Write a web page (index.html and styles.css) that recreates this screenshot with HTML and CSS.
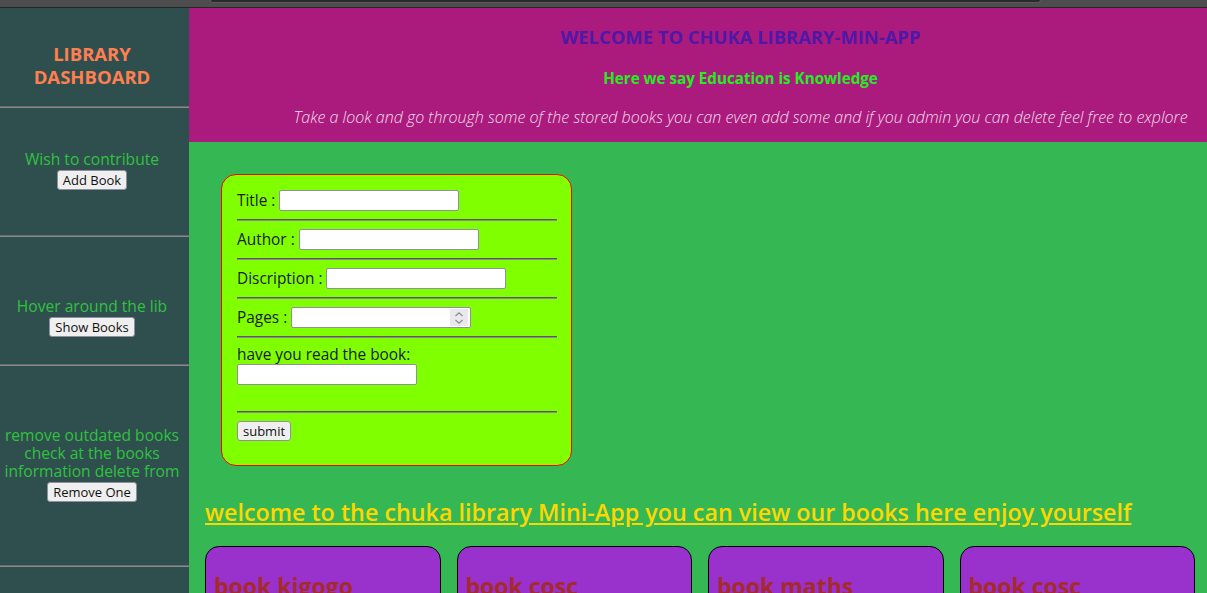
FILE: index.html
```html
<!DOCTYPE html>
<html lang="en">
<head>
<meta charset="utf-8">
<title>Chuka Library</title>
<link rel="stylesheet" href="styles.css">
</head>
<body>
<div class="chrome"><div class="urlbar"></div></div>
<div class="app">
  <aside class="sidebar">
    <div class="brand">LIBRARY<br>DASHBOARD</div>
    <hr class="side-rule">
    <div class="side-sec sec-add">
      <p>Wish to contribute</p>
      <button type="button">Add Book</button>
    </div>
    <hr class="side-rule">
    <div class="side-sec sec-show">
      <p>Hover around the lib</p>
      <button type="button">Show Books</button>
    </div>
    <hr class="side-rule">
    <div class="side-sec sec-remove">
      <p>remove outdated books check at the books information delete from</p>
      <button type="button">Remove One</button>
    </div>
    <hr class="side-rule">
  </aside>
  <main class="main">
    <header class="hero">
      <h1>WELCOME TO CHUKA LIBRARY-MIN-APP</h1>
      <h3>Here we say Education is Knowledge</h3>
      <p>Take a look and go through some of the stored books you can even add some and if you admin you can delete feel free to explore</p>
    </header>
    <section class="content">
      <form class="book-form">
        <div class="row"><label>Title :</label><input type="text" class="field"></div>
        <hr class="form-rule">
        <div class="row"><label>Author :</label><input type="text" class="field"></div>
        <hr class="form-rule">
        <div class="row"><label>Discription :</label><input type="text" class="field"></div>
        <hr class="form-rule">
        <div class="row"><label>Pages :</label>
          <div class="num">
            <input type="text" inputmode="numeric" class="num-input">
            <span class="spin">
              <svg width="10" height="14" viewBox="0 0 10 14"><path d="M1.5 5 L5 1.8 L8.5 5 M1.5 9 L5 12.2 L8.5 9" fill="none" stroke="#8a8a92" stroke-width="1.2"/></svg>
            </span>
          </div>
        </div>
        <hr class="form-rule">
        <div class="read">
          <label>have you read the book:</label>
          <input type="text" class="field">
          <div class="blank"></div>
        </div>
        <hr class="form-rule">
        <button type="button" class="submit">submit</button>
      </form>
      <h2 class="welcome"><a href="#">welcome to the chuka library Mini-App you can view our books here enjoy yourself</a></h2>
      <div class="cards">
        <div class="card"><h2>book kigogo</h2></div>
        <div class="card"><h2>book cosc</h2></div>
        <div class="card"><h2>book maths</h2></div>
        <div class="card"><h2>book cosc</h2></div>
      </div>
    </section>
  </main>
</div>
</body>
</html>
```
FILE: styles.css
```css
* { box-sizing: border-box; }
html, body { margin: 0; padding: 0; }
body {
  font-family: "Open Sans", Lato, sans-serif;
  font-size: 16px;
  background: #35b853;
  height: 593px;
  overflow: hidden;
  display: flex;
  flex-direction: column;
}
.chrome {
  flex: 0 0 8px;
  background: #4d4d4d;
  border-bottom: 1px solid #262626;
}
.urlbar {
  margin-left: 210px;
  width: 831px;
  height: 3px;
  background: #2a2a2a;
  border: 1px solid #5a5a5a;
  border-top: none;
  border-radius: 0 0 4px 4px;
}
.app {
  flex: 1;
  display: flex;
  min-height: 0;
}
.sidebar {
  width: 189px;
  flex: 0 0 189px;
  background: #2f4f4f;
  color: #2fc23e;
  text-align: center;
}
.brand {
  height: 98px;
  padding: 34px 5px 0 0;
  color: #ff7f50;
  font-weight: 700;
  font-size: 18.5px;
  line-height: 23px;
}
.side-rule {
  margin: 0;
  height: 2px;
  border: none;
  border-top: 1px solid #6a6a6a;
  border-bottom: 1px solid #8a8a8a;
}
.side-sec { padding-right: 5px; }
.side-sec p { margin: 0; line-height: 18px; font-size: 15.6px; }
.side-sec button,
.submit {
  font-family: "Open Sans", Lato, sans-serif;
  font-size: 13px;
  line-height: 16px;
  height: 20px;
  padding: 0 5px;
  color: #111;
  background: #efefef;
  border: 1px solid #8f8f9d;
  border-radius: 3px;
}
.sec-add { height: 127px; padding-top: 42px; }
.sec-show { height: 127px; padding-top: 60px; }
.sec-remove { height: 199px; padding-top: 60px; }

.main {
  flex: 1;
  display: flex;
  flex-direction: column;
  min-width: 0;
}
.hero {
  flex: 0 0 134px;
  background: #ab1b7e;
  padding: 18px 10px 0 95px;
  text-align: center;
}
.hero h1 {
  margin: 0;
  font-size: 18.4px;
  line-height: 22px;
  color: #4e18a8;
  font-weight: 700;
}
.hero h3 {
  margin: 20px 0 0;
  font-size: 15.2px;
  line-height: 20px;
  color: #22ee22;
  font-weight: 700;
}
.hero p {
  margin: 19px 0 0;
  font-size: 16px;
  line-height: 20px;
  font-style: italic;
  font-weight: 300;
  color: #f3dcea;
  white-space: nowrap;
}
.content {
  padding: 16px 12px 0 16px;
}
.book-form {
  margin: 16px 0 0 16px;
  width: 351px;
  background: #7fff00;
  border: 1px solid #ff0000;
  border-radius: 15px;
  padding: 15px 14px 24px 15px;
  color: #1a1a1a;
  font-size: 15.4px;
}
.row {
  display: flex;
  align-items: center;
  gap: 4px;
  height: 21px;
}
.field, .num {
  width: 180px;
  height: 21px;
  border: 1px solid #8f8f9d;
  border-radius: 2px;
  background: #fff;
  padding: 1px 2px;
  font-size: 13px;
}
.num {
  display: flex;
  align-items: center;
  padding: 0 2px 0 0;
}
.num-input {
  flex: 1;
  min-width: 0;
  height: 100%;
  border: none;
  outline: none;
  background: transparent;
}
.spin {
  width: 18px;
  height: 17px;
  background: #e9e9ed;
  display: flex;
  align-items: center;
  justify-content: center;
}
.form-rule {
  margin: 8px 0;
  height: 2px;
  border: none;
  border-top: 1px solid #5a5a5a;
  border-bottom: 1px solid #8a8a8a;
}
.read label { display: block; line-height: 18px; }
.read .field { display: block; }
.blank { height: 18px; }
.submit { display: block; }
.welcome {
  margin: 32px 0 0;
  font-size: 23.3px;
  line-height: 28px;
  font-weight: 600;
}
.welcome a { color: #ffd700; text-decoration: underline; }
.cards {
  margin-top: 20px;
  display: grid;
  grid-template-columns: repeat(4, 1fr);
  gap: 16px;
}
.card {
  background: #9932cc;
  border: 1px solid #000;
  border-radius: 14px;
  height: 120px;
  padding: 0 8px;
}
.card h2 {
  margin: 25px 0 0;
  color: #a52a2a;
  font-size: 23px;
  line-height: 28px;
  font-weight: 700;
}
```
